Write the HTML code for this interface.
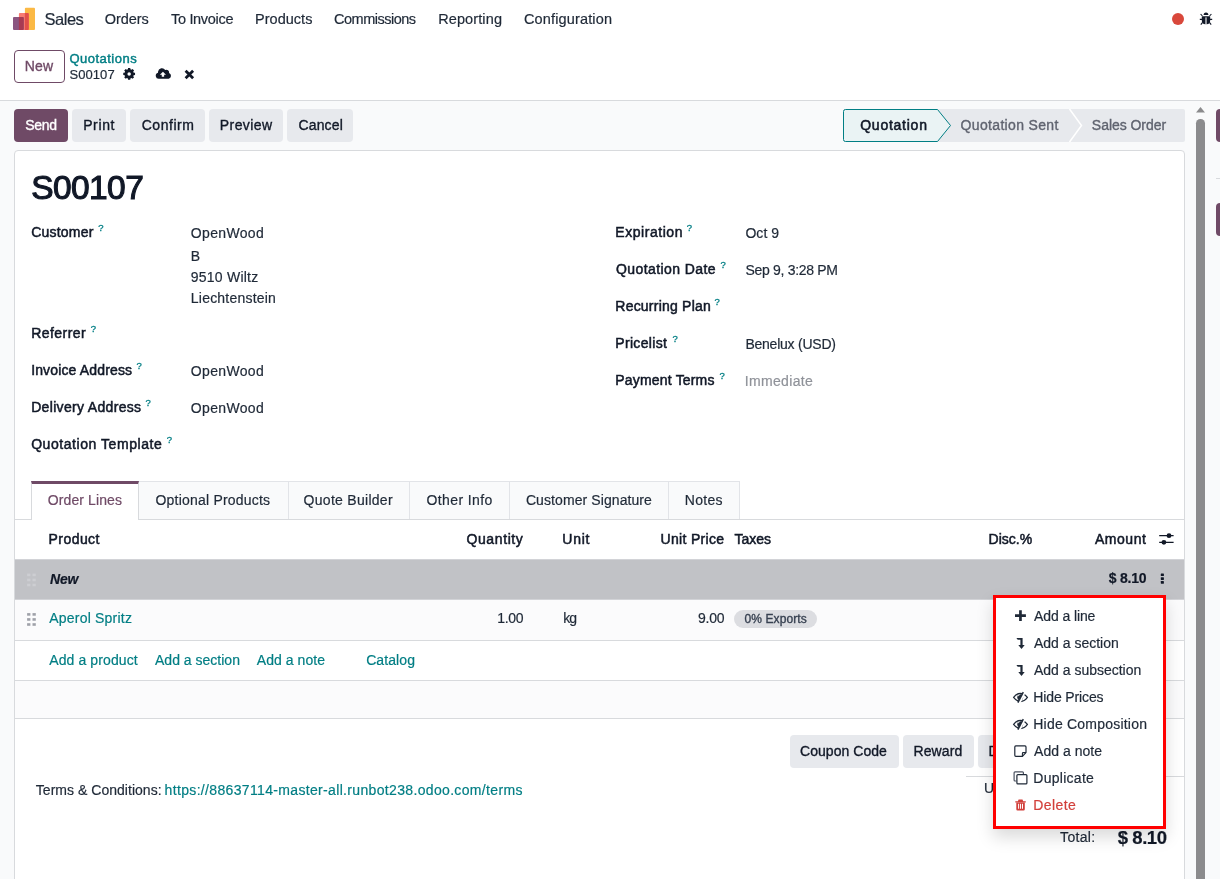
<!DOCTYPE html>
<html><head><meta charset="utf-8"><title>Odoo - S00107</title>
<style>
*{box-sizing:border-box;margin:0;padding:0}
html,body{width:1220px;height:879px;overflow:hidden;background:#fff}
body{font-family:"Liberation Sans",sans-serif;font-size:14px;color:#1f2937;position:relative}
.a{position:absolute}
.t{position:absolute;white-space:nowrap;will-change:opacity;-webkit-text-stroke:0.2px currentColor}
.m{position:absolute;white-space:nowrap}
svg{position:absolute;overflow:visible}
</style></head><body>
<!-- control panel border + content background -->
<div class="a" style="left:0;top:100px;width:1220px;height:1px;background:#d8dadd"></div>
<div class="a" style="left:0;top:101px;width:1220px;height:778px;background:#f9fafb"></div>
<!-- app logo -->
<svg style="left:0;top:0" width="40" height="36" viewBox="0 0 40 36">
  <rect x="24.9" y="7.8" width="10.1" height="22.1" rx="1" fill="#fbb945"/>
  <rect x="18.9" y="13" width="9.9" height="16.9" rx="1" fill="#f87b72"/>
  <rect x="13" y="16.9" width="10.7" height="13" rx="1" fill="#8b5580"/>
  <path d="M24.9 13 H27.8 Q28.8 13 28.8 14 V28.9 Q28.8 29.9 27.8 29.9 H24.9 Z" fill="#e2504a"/>
  <path d="M18.9 16.9 H22.7 Q23.7 16.9 23.7 17.9 V28.9 Q23.7 29.9 22.7 29.9 H18.9 Z" fill="#a83a52"/>
</svg>
<div class="a" style="left:1172.2px;top:13px;width:12px;height:12px;border-radius:50%;background:#d9483b"></div>
<!-- New button -->
<div class="a" style="left:14px;top:50px;width:51px;height:33px;border:1px solid #6f4a66;border-radius:4px;background:#fff"></div>
<!-- action buttons -->
<div class="a" style="left:14px;top:109px;width:54px;height:33px;border-radius:4px;background:#6f4a66"></div>
<div class="a" style="left:72px;top:109px;width:54px;height:33px;border-radius:4px;background:#e7e9ed"></div>
<div class="a" style="left:130px;top:109px;width:75px;height:33px;border-radius:4px;background:#e7e9ed"></div>
<div class="a" style="left:209px;top:109px;width:74px;height:33px;border-radius:4px;background:#e7e9ed"></div>
<div class="a" style="left:287px;top:109px;width:66px;height:33px;border-radius:4px;background:#e7e9ed"></div>
<!-- statusbar -->
<svg style="left:843px;top:109px" width="342" height="33" viewBox="0 0 342 33">
  <rect x="0" y="0" width="342" height="33" rx="2" fill="#e7e9ed"/>
  <path d="M226.5 0 L238.5 16.5 L226.5 33" fill="none" stroke="#fff" stroke-width="1.5"/>
  <path d="M0.5 2.5 Q0.5 0.5 2.5 0.5 L94.5 0.5 L107.5 16.5 L94.5 32.5 L2.5 32.5 Q0.5 32.5 0.5 30.5 Z" fill="#eaf3f4" stroke="#017e84" stroke-width="1"/>
</svg>
<!-- sheet -->
<div class="a" style="left:14px;top:150px;width:1171px;height:741px;background:#fff;border:1px solid #d8dadd;border-radius:4px 4px 0 0"></div>
<!-- tabs -->
<div class="a" style="left:15px;top:519px;width:1169px;height:1px;background:#d8dadd"></div>
<div class="a" style="left:139px;top:481px;width:601px;height:38px;background:#f9fafb;border-top:1px solid #e2e4e8"></div>
<div class="a" style="left:288px;top:481px;width:1px;height:38px;background:#e2e4e8"></div>
<div class="a" style="left:409px;top:481px;width:1px;height:38px;background:#e2e4e8"></div>
<div class="a" style="left:509px;top:481px;width:1px;height:38px;background:#e2e4e8"></div>
<div class="a" style="left:668px;top:481px;width:1px;height:38px;background:#e2e4e8"></div>
<div class="a" style="left:739px;top:481px;width:1px;height:38px;background:#e2e4e8"></div>
<div class="a" style="left:31px;top:481px;width:108px;height:39px;background:#fff;border-left:1px solid #d8dadd;border-right:1px solid #d8dadd;border-top:3px solid #6f4a66"></div>
<!-- table rows -->
<div class="a" style="left:15px;top:559px;width:1169px;height:41px;background:#c1c2c6;border-top:1px solid #d2d3d7;border-bottom:1px solid #d2d3d7"></div>
<div class="a" style="left:15px;top:600px;width:1169px;height:41px;background:#fbfbfc;border-bottom:1px solid #d8dadd"></div>
<div class="a" style="left:15px;top:680px;width:1169px;height:1px;background:#d8dadd"></div>
<div class="a" style="left:15px;top:681px;width:1169px;height:38px;background:#fbfbfc;border-bottom:1px solid #d8dadd"></div>
<!-- tax pill -->
<div class="a" style="left:734px;top:610px;width:83px;height:18px;border-radius:9px;background:#dcdde1"></div>
<!-- bottom buttons -->
<div class="a" style="left:790px;top:735px;width:109px;height:33px;border-radius:4px;background:#e7e9ed"></div>
<div class="a" style="left:903px;top:735px;width:71px;height:33px;border-radius:4px;background:#e7e9ed"></div>
<div class="a" style="left:978px;top:735px;width:80px;height:33px;border-radius:4px;background:#e7e9ed"></div>
<div class="a" style="left:966px;top:776px;width:218px;height:1px;background:#d8dadd"></div>
<svg style="left:0;top:0" width="1220" height="879" viewBox="0 0 1220 879"><path d="M133.68 72.65 L135.04 72.77 L135.04 75.03 L133.68 75.15 L133.24 76.22 L134.12 77.27 L132.52 78.87 L131.47 77.99 L130.40 78.43 L130.28 79.79 L128.02 79.79 L127.90 78.43 L126.83 77.99 L125.78 78.87 L124.18 77.27 L125.06 76.22 L124.62 75.15 L123.26 75.03 L123.26 72.77 L124.62 72.65 L125.06 71.58 L124.18 70.53 L125.78 68.93 L126.83 69.81 L127.90 69.37 L128.02 68.01 L130.28 68.01 L130.40 69.37 L131.47 69.81 L132.52 68.93 L134.12 70.53 L133.24 71.58 Z M130.90 73.90 A1.75 1.75 0 1 0 127.40 73.90 A1.75 1.75 0 1 0 130.90 73.90 Z" fill="#111827" fill-rule="evenodd"/>
<path d="M158.9 78.7 a3 3 0 0 1 -0.9 -5.9 a3.6 3.6 0 0 1 0.1 -1.2 a3.8 3.8 0 0 1 7.1 -1.5 a2.7 2.7 0 0 1 3.9 2.9 a3 3 0 0 1 -0.4 5.7 Z" fill="#111827"/>
<path d="M162.95 71.7 L166 74.7 L164.15 74.7 L164.15 76.8 L161.75 76.8 L161.75 74.7 L159.9 74.7 Z" fill="#fff"/>
<path d="M185.6 70.7 L193.1 78.2 M193.1 70.7 L185.6 78.2" stroke="#111827" stroke-width="2.8" stroke-linecap="butt" fill="none"/>
<g fill="#111827" stroke="none"><path d="M1203.6 15 a2.4 2.6 0 0 1 4.8 0 Z"/><path d="M1202.3 16.2 L1209.7 16.2 Q1210.2 16.2 1210.2 16.8 L1210.2 20.5 Q1210.2 24 1206.6 24.2 L1206.6 17.6 L1205.4 17.6 L1205.4 24.2 Q1201.8 24 1201.8 20.5 L1201.8 16.8 Q1201.8 16.2 1202.3 16.2 Z"/></g><path d="M1205.4 17.6 H1206.6 V24.2 H1205.4 Z" fill="#8b8e96"/><path d="M1199.8 19.4 H1202 M1210 19.4 H1212.2 M1200.6 14 L1202.4 16 M1211.4 14 L1209.6 16 M1200.8 24.6 L1202.6 22.4 M1211.2 24.6 L1209.4 22.4" stroke="#111827" stroke-width="1.1" fill="none"/>
<path d="M1159.2 535.7 H1173.6 M1159.2 542.3 H1173.6" stroke="#111827" stroke-width="1.3" fill="none"/><circle cx="1169" cy="535.7" r="2.4" fill="#111827"/><circle cx="1163.9" cy="542.3" r="2.4" fill="#111827"/>
<rect x="1160.8" y="573.5" width="3.1" height="2.6" rx="0.4" fill="#111827"/>
<rect x="1160.8" y="577.3" width="3.1" height="2.6" rx="0.4" fill="#111827"/>
<rect x="1160.8" y="581.1" width="3.1" height="2.6" rx="0.4" fill="#111827"/>
<rect x="27.1" y="573.60" width="3.3" height="2.6" fill="#cdced2"/>
<rect x="27.1" y="578.65" width="3.3" height="2.6" fill="#cdced2"/>
<rect x="27.1" y="583.70" width="3.3" height="2.6" fill="#cdced2"/>
<rect x="32.5" y="573.60" width="3.3" height="2.6" fill="#cdced2"/>
<rect x="32.5" y="578.65" width="3.3" height="2.6" fill="#cdced2"/>
<rect x="32.5" y="583.70" width="3.3" height="2.6" fill="#cdced2"/>
<rect x="27.1" y="613.10" width="3.3" height="2.6" fill="#9fa1a9"/>
<rect x="27.1" y="618.15" width="3.3" height="2.6" fill="#9fa1a9"/>
<rect x="27.1" y="623.20" width="3.3" height="2.6" fill="#9fa1a9"/>
<rect x="32.5" y="613.10" width="3.3" height="2.6" fill="#9fa1a9"/>
<rect x="32.5" y="618.15" width="3.3" height="2.6" fill="#9fa1a9"/>
<rect x="32.5" y="623.20" width="3.3" height="2.6" fill="#9fa1a9"/></svg>
<div class="t L0" id="t0" style="top:9.00px;font-size:16.5px;line-height:20px;color:#1f2937;letter-spacing:-0.525px;left:44.61px;">Sales</div>
<div class="t L0" id="t1" style="top:11.00px;font-size:14.5px;line-height:17px;color:#1f2937;letter-spacing:-0.060px;left:104.84px;">Orders</div>
<div class="t L0" id="t2" style="top:11.00px;font-size:14.5px;line-height:17px;color:#1f2937;letter-spacing:-0.313px;left:171.00px;">To Invoice</div>
<div class="t L0" id="t3" style="top:11.00px;font-size:14.5px;line-height:17px;color:#1f2937;letter-spacing:0.015px;left:255.07px;">Products</div>
<div class="t L0" id="t4" style="top:11.00px;font-size:14.5px;line-height:17px;color:#1f2937;letter-spacing:-0.492px;left:334.00px;">Commissions</div>
<div class="t L0" id="t5" style="top:11.00px;font-size:14.5px;line-height:17px;color:#1f2937;letter-spacing:0.116px;left:438.15px;">Reporting</div>
<div class="t L0" id="t6" style="top:11.00px;font-size:14.5px;line-height:17px;color:#1f2937;letter-spacing:0.142px;left:524.00px;">Configuration</div>
<div class="t L0" id="t7" style="top:58.00px;font-size:14px;line-height:17px;color:#6f4a66;letter-spacing:0.237px;left:24.76px;-webkit-text-stroke:0.35px currentColor;">New</div>
<div class="t L0" id="t8" style="top:51.00px;font-size:13px;line-height:16px;color:#017e84;letter-spacing:0.488px;left:69.38px;-webkit-text-stroke:0.45px currentColor;">Quotations</div>
<div class="t L0" id="t9" style="top:67.00px;font-size:13px;line-height:16px;color:#1f2937;letter-spacing:0.086px;left:69.38px;">S00107</div>
<div class="t L0" id="t10" style="top:117.00px;font-size:14px;line-height:17px;color:#fff;letter-spacing:-0.301px;left:25.23px;-webkit-text-stroke:0.35px currentColor;">Send</div>
<div class="t L0" id="t11" style="top:117.00px;font-size:14px;line-height:17px;color:#111827;letter-spacing:0.632px;left:83.15px;-webkit-text-stroke:0.35px currentColor;">Print</div>
<div class="t L0" id="t12" style="top:117.00px;font-size:14px;line-height:17px;color:#111827;letter-spacing:0.540px;left:141.69px;-webkit-text-stroke:0.35px currentColor;">Confirm</div>
<div class="t L0" id="t13" style="top:117.00px;font-size:14px;line-height:17px;color:#111827;letter-spacing:0.410px;left:219.84px;-webkit-text-stroke:0.35px currentColor;">Preview</div>
<div class="t L0" id="t14" style="top:117.00px;font-size:14px;line-height:17px;color:#111827;letter-spacing:0.149px;left:298.46px;-webkit-text-stroke:0.35px currentColor;">Cancel</div>
<div class="t L0" id="t15" style="top:117.00px;font-size:14px;line-height:17px;color:#111827;letter-spacing:0.751px;left:860.23px;-webkit-text-stroke:0.55px currentColor;">Quotation</div>
<div class="t L0" id="t16" style="top:117.00px;font-size:14px;line-height:17px;color:#5f636f;letter-spacing:0.342px;left:960.54px;-webkit-text-stroke:0.35px currentColor;">Quotation Sent</div>
<div class="t L0" id="t17" style="top:117.00px;font-size:14px;line-height:17px;color:#5f636f;letter-spacing:-0.037px;left:1091.84px;-webkit-text-stroke:0.35px currentColor;">Sales Order</div>
<div class="t L0" id="t18" style="top:168.00px;font-size:33.5px;line-height:40px;color:#111827;letter-spacing:-0.570px;left:31.15px;-webkit-text-stroke:1.1px currentColor;">S00107</div>
<div class="t L0" id="t19" style="top:224.00px;font-size:14px;line-height:17px;color:#111827;letter-spacing:0.213px;left:31.15px;-webkit-text-stroke:0.5px currentColor;">Customer</div>
<div class="t L0" id="t20" style="top:222.00px;font-size:9.5px;line-height:11px;color:#017e84;left:98.31px;-webkit-text-stroke:0.3px currentColor;">?</div>
<div class="t L0" id="t21" style="top:325.00px;font-size:14px;line-height:17px;color:#111827;letter-spacing:0.469px;left:31.15px;-webkit-text-stroke:0.5px currentColor;">Referrer</div>
<div class="t L0" id="t22" style="top:323.00px;font-size:9.5px;line-height:11px;color:#017e84;left:90.77px;-webkit-text-stroke:0.3px currentColor;">?</div>
<div class="t L0" id="t23" style="top:362.00px;font-size:14px;line-height:17px;color:#111827;letter-spacing:0.150px;left:31.15px;-webkit-text-stroke:0.5px currentColor;">Invoice Address</div>
<div class="t L0" id="t24" style="top:360.00px;font-size:9.5px;line-height:11px;color:#017e84;left:136.38px;-webkit-text-stroke:0.3px currentColor;">?</div>
<div class="t L0" id="t25" style="top:399.00px;font-size:14px;line-height:17px;color:#111827;letter-spacing:0.327px;left:31.15px;-webkit-text-stroke:0.5px currentColor;">Delivery Address</div>
<div class="t L0" id="t26" style="top:397.00px;font-size:9.5px;line-height:11px;color:#017e84;left:145.38px;-webkit-text-stroke:0.3px currentColor;">?</div>
<div class="t L0" id="t27" style="top:436.00px;font-size:14px;line-height:17px;color:#111827;letter-spacing:0.557px;left:31.15px;-webkit-text-stroke:0.5px currentColor;">Quotation Template</div>
<div class="t L0" id="t28" style="top:434.00px;font-size:9.5px;line-height:11px;color:#017e84;left:166.77px;-webkit-text-stroke:0.3px currentColor;">?</div>
<div class="t L0" id="t29" style="top:224.00px;font-size:14px;line-height:17px;color:#111827;letter-spacing:0.547px;left:615.30px;-webkit-text-stroke:0.5px currentColor;">Expiration</div>
<div class="t L0" id="t30" style="top:222.00px;font-size:9.5px;line-height:11px;color:#017e84;left:686.77px;-webkit-text-stroke:0.3px currentColor;">?</div>
<div class="t L0" id="t31" style="top:261.00px;font-size:14px;line-height:17px;color:#111827;letter-spacing:0.413px;left:616.00px;-webkit-text-stroke:0.5px currentColor;">Quotation Date</div>
<div class="t L0" id="t32" style="top:259.00px;font-size:9.5px;line-height:11px;color:#017e84;left:720.54px;-webkit-text-stroke:0.3px currentColor;">?</div>
<div class="t L0" id="t33" style="top:298.00px;font-size:14px;line-height:17px;color:#111827;letter-spacing:0.223px;left:615.30px;-webkit-text-stroke:0.5px currentColor;">Recurring Plan</div>
<div class="t L0" id="t34" style="top:296.00px;font-size:9.5px;line-height:11px;color:#017e84;left:714.38px;-webkit-text-stroke:0.3px currentColor;">?</div>
<div class="t L0" id="t35" style="top:335.00px;font-size:14px;line-height:17px;color:#111827;letter-spacing:0.318px;left:615.30px;-webkit-text-stroke:0.5px currentColor;">Pricelist</div>
<div class="t L0" id="t36" style="top:333.00px;font-size:9.5px;line-height:11px;color:#017e84;left:672.54px;-webkit-text-stroke:0.3px currentColor;">?</div>
<div class="t L0" id="t37" style="top:372.00px;font-size:14px;line-height:17px;color:#111827;letter-spacing:0.181px;left:615.30px;-webkit-text-stroke:0.5px currentColor;">Payment Terms</div>
<div class="t L0" id="t38" style="top:370.00px;font-size:9.5px;line-height:11px;color:#017e84;left:719.46px;-webkit-text-stroke:0.3px currentColor;">?</div>
<div class="t L0" id="t39" style="top:225.00px;font-size:14px;line-height:17px;color:#1f2937;letter-spacing:0.340px;left:190.84px;">OpenWood</div>
<div class="t L0" id="t40" style="top:248.00px;font-size:14px;line-height:17px;color:#1f2937;left:190.84px;">B</div>
<div class="t L0" id="t41" style="top:269.00px;font-size:14px;line-height:17px;color:#1f2937;letter-spacing:0.220px;left:190.84px;">9510 Wiltz</div>
<div class="t L0" id="t42" style="top:290.00px;font-size:14px;line-height:17px;color:#1f2937;letter-spacing:0.208px;left:190.84px;">Liechtenstein</div>
<div class="t L0" id="t43" style="top:363.00px;font-size:14px;line-height:17px;color:#1f2937;letter-spacing:0.340px;left:190.84px;">OpenWood</div>
<div class="t L0" id="t44" style="top:400.00px;font-size:14px;line-height:17px;color:#1f2937;letter-spacing:0.340px;left:190.84px;">OpenWood</div>
<div class="t L0" id="t45" style="top:225.00px;font-size:14px;line-height:17px;color:#1f2937;letter-spacing:0.063px;left:745.38px;">Oct 9</div>
<div class="t L0" id="t46" style="top:262.00px;font-size:14px;line-height:17px;color:#1f2937;letter-spacing:-0.297px;left:745.38px;">Sep 9, 3:28 PM</div>
<div class="t L0" id="t47" style="top:336.00px;font-size:14px;line-height:17px;color:#1f2937;letter-spacing:-0.227px;left:745.38px;">Benelux (USD)</div>
<div class="t L0" id="t48" style="top:373.00px;font-size:14px;line-height:17px;color:#8f9299;letter-spacing:0.354px;left:744.68px;">Immediate</div>
<div class="t L0" id="t49" style="top:492.00px;font-size:14px;line-height:17px;color:#6f4a66;letter-spacing:0.095px;left:47.84px;">Order Lines</div>
<div class="t L0" id="t50" style="top:492.00px;font-size:14px;line-height:17px;color:#1f2937;letter-spacing:0.210px;left:155.46px;">Optional Products</div>
<div class="t L0" id="t51" style="top:492.00px;font-size:14px;line-height:17px;color:#1f2937;letter-spacing:0.279px;left:303.61px;">Quote Builder</div>
<div class="t L0" id="t52" style="top:492.00px;font-size:14px;line-height:17px;color:#1f2937;letter-spacing:0.409px;left:426.46px;">Other Info</div>
<div class="t L0" id="t53" style="top:492.00px;font-size:14px;line-height:17px;color:#1f2937;letter-spacing:0.088px;left:525.92px;">Customer Signature</div>
<div class="t L0" id="t54" style="top:492.00px;font-size:14px;line-height:17px;color:#1f2937;letter-spacing:0.305px;left:684.76px;">Notes</div>
<div class="t L0" id="t55" style="top:531.00px;font-size:14px;line-height:17px;color:#111827;letter-spacing:0.450px;left:48.53px;-webkit-text-stroke:0.5px currentColor;">Product</div>
<div class="t L0" id="t56" style="top:531.00px;font-size:14px;line-height:17px;color:#111827;letter-spacing:0.608px;left:466.46px;-webkit-text-stroke:0.5px currentColor;">Quantity</div>
<div class="t L0" id="t57" style="top:531.00px;font-size:14px;line-height:17px;color:#111827;letter-spacing:0.732px;left:562.30px;-webkit-text-stroke:0.5px currentColor;">Unit</div>
<div class="t L0" id="t58" style="top:531.00px;font-size:14px;line-height:17px;color:#111827;letter-spacing:0.321px;left:660.53px;-webkit-text-stroke:0.5px currentColor;">Unit Price</div>
<div class="t L0" id="t59" style="top:531.00px;font-size:14px;line-height:17px;color:#111827;letter-spacing:-0.005px;left:734.54px;-webkit-text-stroke:0.5px currentColor;">Taxes</div>
<div class="t L0" id="t60" style="top:531.00px;font-size:14px;line-height:17px;color:#111827;letter-spacing:0.002px;left:988.53px;-webkit-text-stroke:0.5px currentColor;">Disc.%</div>
<div class="t L0" id="t61" style="top:531.00px;font-size:14px;line-height:17px;color:#111827;letter-spacing:0.522px;left:1095.00px;-webkit-text-stroke:0.5px currentColor;">Amount</div>
<div class="t L0" id="t62" style="top:571.00px;font-size:14px;line-height:17px;color:#111827;font-weight:bold;font-style:italic;letter-spacing:-0.198px;left:50.00px;">New</div>
<div class="t L0" id="t63" style="top:570.00px;font-size:14px;line-height:17px;color:#111827;font-weight:bold;letter-spacing:-0.213px;left:1108.77px;">$ 8.10</div>
<div class="t L0" id="t64" style="top:610.00px;font-size:14px;line-height:17px;color:#017e84;letter-spacing:0.213px;left:49.23px;">Aperol Spritz</div>
<div class="t L0" id="t65" style="top:610.00px;font-size:14px;line-height:17px;color:#1f2937;letter-spacing:-0.281px;left:497.15px;">1.00</div>
<div class="t L0" id="t66" style="top:610.00px;font-size:14px;line-height:17px;color:#1f2937;letter-spacing:-0.997px;left:563.15px;">kg</div>
<div class="t L0" id="t67" style="top:610.00px;font-size:14px;line-height:17px;color:#1f2937;letter-spacing:-0.176px;left:697.92px;">9.00</div>
<div class="t L0" id="t68" style="top:612.00px;font-size:12px;line-height:14px;color:#374151;letter-spacing:0.099px;left:744.54px;-webkit-text-stroke:0.35px currentColor;">0% Exports</div>
<div class="t L0" id="t69" style="top:652.00px;font-size:14px;line-height:17px;color:#017e84;letter-spacing:0.108px;left:49.23px;">Add a product</div>
<div class="t L0" id="t70" style="top:652.00px;font-size:14px;line-height:17px;color:#017e84;letter-spacing:0.009px;left:155.00px;">Add a section</div>
<div class="t L0" id="t71" style="top:652.00px;font-size:14px;line-height:17px;color:#017e84;letter-spacing:0.040px;left:256.85px;">Add a note</div>
<div class="t L0" id="t72" style="top:652.00px;font-size:14px;line-height:17px;color:#017e84;letter-spacing:0.089px;left:366.15px;">Catalog</div>
<div class="t L0" id="t73" style="top:782.00px;font-size:14px;line-height:17px;color:#1f2937;letter-spacing:0.025px;left:35.85px;">Terms &amp; Conditions:</div>
<div class="t L0" id="t74" style="top:782.00px;font-size:14px;line-height:17px;color:#017e84;letter-spacing:0.337px;left:164.61px;">https://88637114-master-all.runbot238.odoo.com/terms</div>
<div class="t L0" id="t75" style="top:743.00px;font-size:14px;line-height:17px;color:#111827;letter-spacing:0.039px;left:800.07px;-webkit-text-stroke:0.35px currentColor;">Coupon Code</div>
<div class="t L0" id="t76" style="top:743.00px;font-size:14px;line-height:17px;color:#111827;letter-spacing:0.156px;left:913.38px;-webkit-text-stroke:0.35px currentColor;">Reward</div>
<div class="t L0" id="t77" style="top:743.00px;font-size:14px;line-height:17px;color:#111827;left:988.53px;-webkit-text-stroke:0.35px currentColor;">Discount</div>
<div class="t L0" id="t78" style="top:780.00px;font-size:14px;line-height:17px;color:#1f2937;left:983.92px;">Untaxed Amount:</div>
<div class="t L0" id="t79" style="top:829.00px;font-size:14px;line-height:17px;color:#1f2937;letter-spacing:0.326px;left:1060.08px;">Total:</div>
<div class="t L0" id="t80" style="top:827.00px;font-size:18.5px;line-height:22px;color:#111827;font-weight:bold;letter-spacing:-0.468px;left:1117.85px;">$ 8.10</div>
<!-- dropdown -->
<div class="a" style="left:993px;top:594.6px;width:173.4px;height:234.4px;background:#fff;border:3px solid #f00;box-shadow:0 8px 16px rgba(0,0,0,.15)"></div>
<div class="t L1" id="t81" style="top:608.00px;font-size:14px;line-height:17px;color:#1f2937;letter-spacing:-0.096px;left:1034.00px;">Add a line</div>
<div class="t L1" id="t82" style="top:635.00px;font-size:14px;line-height:17px;color:#1f2937;letter-spacing:-0.010px;left:1034.00px;">Add a section</div>
<div class="t L1" id="t83" style="top:662.00px;font-size:14px;line-height:17px;color:#1f2937;letter-spacing:-0.014px;left:1034.00px;">Add a subsection</div>
<div class="t L1" id="t84" style="top:689.00px;font-size:14px;line-height:17px;color:#1f2937;letter-spacing:-0.133px;left:1033.30px;">Hide Prices</div>
<div class="t L1" id="t85" style="top:716.00px;font-size:14px;line-height:17px;color:#1f2937;letter-spacing:0.210px;left:1033.30px;">Hide Composition</div>
<div class="t L1" id="t86" style="top:743.00px;font-size:14px;line-height:17px;color:#1f2937;letter-spacing:0.040px;left:1034.00px;">Add a note</div>
<div class="t L1" id="t87" style="top:770.00px;font-size:14px;line-height:17px;color:#1f2937;letter-spacing:0.275px;left:1033.30px;">Duplicate</div>
<div class="t L1" id="t88" style="top:797.00px;font-size:14px;line-height:17px;color:#d23f3a;letter-spacing:0.420px;left:1033.30px;">Delete</div>
<svg style="left:0;top:0" width="1220" height="879" viewBox="0 0 1220 879"><path d="M1015 615.6 H1025.9 M1020.45 610.2 V621" stroke="#1f2937" stroke-width="2.7" fill="none"/>
<path d="M1016.4 638.10 H1022.6 V645.10 H1024.7 L1021.5 649.00 L1018.3 645.10 H1020.4 V639.70 H1017.7 Z" fill="#1f2937"/>
<path d="M1016.4 665.10 H1022.6 V672.10 H1024.7 L1021.5 676.00 L1018.3 672.10 H1020.4 V666.70 H1017.7 Z" fill="#1f2937"/>
<path d="M1013.6 697.4 Q1016.6 693.3 1020.5 693.3 Q1024.4 693.3 1027.4 697.4 Q1024.4 701.5 1020.5 701.5 Q1016.6 701.5 1013.6 697.4 Z" fill="none" stroke="#1f2937" stroke-width="1.25"/><circle cx="1020.2" cy="697.1999999999999" r="2.9" fill="#1f2937"/><path d="M1018.2 696.1999999999999 a1.6 1.6 0 0 1 1.6 -1.5" stroke="#fff" stroke-width="0.8" fill="none"/><path d="M1024.6 691.8 L1019.2 703.0" stroke="#fff" stroke-width="2.6" fill="none"/><path d="M1023.3 692.1 L1017.9 702.6999999999999" stroke="#1f2937" stroke-width="1.5" fill="none"/>
<path d="M1013.6 724.4 Q1016.6 720.3 1020.5 720.3 Q1024.4 720.3 1027.4 724.4 Q1024.4 728.5 1020.5 728.5 Q1016.6 728.5 1013.6 724.4 Z" fill="none" stroke="#1f2937" stroke-width="1.25"/><circle cx="1020.2" cy="724.1999999999999" r="2.9" fill="#1f2937"/><path d="M1018.2 723.1999999999999 a1.6 1.6 0 0 1 1.6 -1.5" stroke="#fff" stroke-width="0.8" fill="none"/><path d="M1024.6 718.8 L1019.2 730.0" stroke="#fff" stroke-width="2.6" fill="none"/><path d="M1023.3 719.1 L1017.9 729.6999999999999" stroke="#1f2937" stroke-width="1.5" fill="none"/>
<path d="M1015.8 745.9 H1025 Q1026 745.9 1026 746.9 V752.6 L1022.4 756.3 H1015.8 Q1014.8 756.3 1014.8 755.3 V746.9 Q1014.8 745.9 1015.8 745.9 Z" fill="none" stroke="#1f2937" stroke-width="1.2"/><path d="M1026 752.6 H1023.2 Q1022.4 752.6 1022.4 753.4 V756.3" fill="none" stroke="#1f2937" stroke-width="1.1"/>
<path d="M1016.3 781 H1015 Q1014.1 781 1014.1 780 V772.7 Q1014.1 771.8 1015 771.8 H1022.5 Q1023.4 771.8 1023.4 772.7 V774" fill="none" stroke="#4b5260" stroke-width="1.2"/><rect x="1016.9" y="774.6" width="10" height="9.3" rx="1" fill="#fff" stroke="#1f2937" stroke-width="1.2"/>
<path d="M1015.3 801.2 H1025.8 V802.5 H1015.3 Z M1018.6 799.6 H1022.5 L1023.2 801.2 H1017.9 Z" fill="#d23f3a"/><path d="M1016.3 802.5 H1024.8 V809.2 Q1024.8 810.4 1023.6 810.4 H1017.5 Q1016.3 810.4 1016.3 809.2 Z M1018.1 803.8 V808.8 H1019.1 V803.8 Z M1020.05 803.8 V808.8 H1021.05 V803.8 Z M1022 803.8 V808.8 H1023 V803.8 Z" fill="#d23f3a" fill-rule="evenodd"/></svg>
<!-- right side: scrollbar + chatter -->
<div class="a" style="left:1185px;top:101px;width:35px;height:778px;background:#f9fafb"></div>
<div class="a" style="left:1196.2px;top:118.8px;width:8.6px;height:780px;background:#8b8b8d;border-radius:4.3px"></div>
<svg style="left:1196px;top:106.6px" width="9" height="5.4" viewBox="0 0 9 5.4"><path d="M0 5.4 L4.5 0 L9 5.4 Z" fill="#8b8b8d"/></svg>
<div class="a" style="left:1216px;top:109px;width:10px;height:33px;background:#6f4a66;border-radius:4px"></div>
<div class="a" style="left:1216px;top:178px;width:5px;height:1px;background:#d8dadd"></div>
<div class="a" style="left:1216px;top:203px;width:10px;height:32.5px;background:#6f4a66;border-radius:4px"></div>
</body></html>
